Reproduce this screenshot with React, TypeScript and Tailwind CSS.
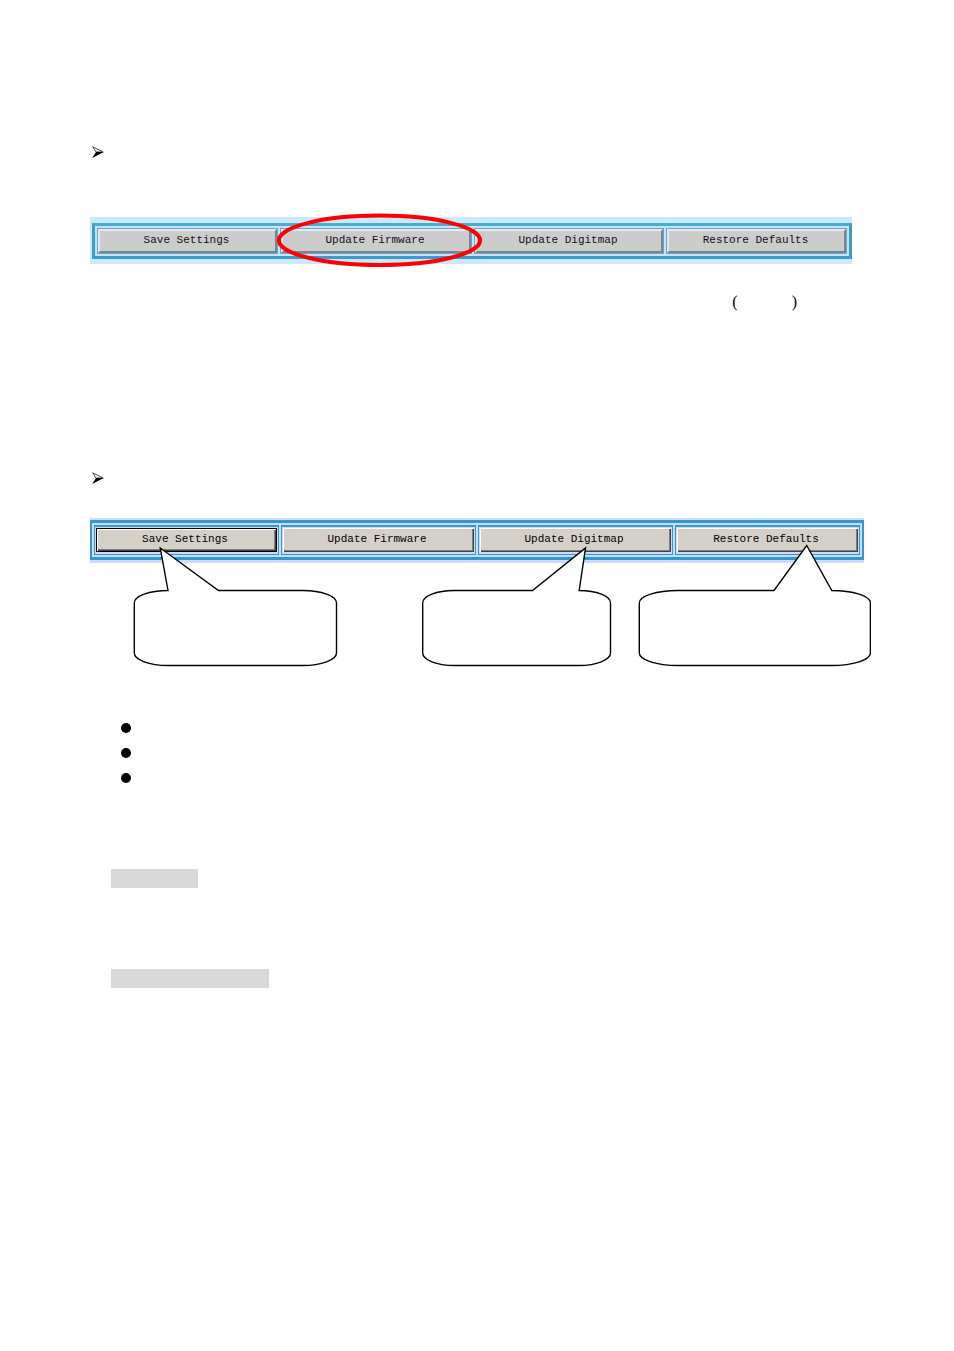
import React from "react";

const actions = ["Save Settings", "Update Firmware", "Update Digitmap", "Restore Defaults"];

function ArrowBullet() {
  return (
    <svg className="block h-3 w-3" viewBox="0 0 12 12" aria-hidden="true">
      <path d="M0.7 0.8 L11.2 6 L4 6 Z" fill="#fff" stroke="#333" strokeWidth="0.9" />
      <path d="M4 6 L11.7 6 L0.2 12 Z" fill="#000" />
    </svg>
  );
}

function SoftToolbar() {
  return (
    <div className="bg-[#cbe9fb] pt-[6px] pb-[5px] pl-[2px]">
      <div className="border-[3px] border-t-[#45b0cb] border-r-[#3a9bd0] border-b-[#3b9ad0] border-l-[#3d9fd0] bg-[#cfe0fb] p-[2px]">
        <div className="grid grid-cols-[181fr_192fr_190fr_181fr] gap-[2px]">
          {actions.map((label) => (
            <div key={label} className="flex border border-[#4fb0dc] bg-[#cfe6fa]">
              <button
                type="button"
                className="h-6 min-w-0 flex-1 border-2 border-t-[#e9eaec] border-r-[#828282] border-b-[#828282] border-l-[#e6e6e6] bg-[#cccccc] pr-[2px] pb-[2px] font-['Liberation_Mono',monospace] text-[11px] leading-4 whitespace-nowrap text-[#111]"
              >
                {label}
              </button>
            </div>
          ))}
        </div>
      </div>
    </div>
  );
}

function SharpToolbar() {
  return (
    <div className="bg-[#ccdcff] pt-[2px] pb-[3px]">
      <div className="border-x-2 border-y-[3px] border-[#3399cc] p-[2px]">
        <div className="grid grid-cols-[185fr_195fr_195fr_185fr] gap-[2px]">
          {actions.map((label, i) => (
            <div key={label} className="flex border border-t-2 border-[#3399cc] px-px pt-px pb-[2px]">
              <button
                type="button"
                className={
                  "h-6 min-w-0 flex-1 bg-[#d4d0c8] pr-[3px] pb-[2px] font-['Liberation_Mono',monospace] text-[11px] leading-4 whitespace-nowrap text-black " +
                  (i === 0
                    ? "border border-black shadow-[inset_1px_1px_0_#fff,inset_-1px_-1px_0_#404040,inset_-2px_-2px_0_#808080]"
                    : "shadow-[inset_1px_1px_0_#fff,inset_-1px_-1px_0_#404040,inset_-2px_-2px_0_#808080]")
                }
              >
                {label}
              </button>
            </div>
          ))}
        </div>
      </div>
    </div>
  );
}

function Callouts() {
  return (
    <svg
      className="pointer-events-none absolute top-0 left-0 h-auto w-full"
      viewBox="0 0 781 149"
      fill="#fff"
      stroke="#000"
      strokeWidth="1.4"
      strokeLinejoin="miter"
      aria-hidden="true"
    >
      <path d="M78 72.5 L70.3 30 L128.5 72.5 H212.8 A33.7 12.5 0 0 1 246.5 85 V135 A33.7 12.5 0 0 1 212.8 147.5 H78 A33.7 12.5 0 0 1 44.3 135 V85 A33.7 12.5 0 0 1 78 72.5 Z" />
      <path d="M364 72.5 H442.5 L495.5 30 L489.2 72.5 A31.3 12.5 0 0 1 520.5 85 V135 A31.3 12.5 0 0 1 489.2 147.5 H364 A31.3 12.5 0 0 1 332.7 135 V85 A31.3 12.5 0 0 1 364 72.5 Z" />
      <path d="M587.9 72.5 H684 L716.7 27.5 L741.8 72.5 A38.6 12.5 0 0 1 780.4 85 V135 A38.6 12.5 0 0 1 741.8 147.5 H587.9 A38.6 12.5 0 0 1 549.3 135 V85 A38.6 12.5 0 0 1 587.9 72.5 Z" />
    </svg>
  );
}

export default function App() {
  return (
    <main className="min-h-screen bg-white pt-[146px] pr-[83px] pb-16 pl-[90px] text-black">
      <section>
        <div className="pl-[2px]">
          <ArrowBullet />
        </div>
        <div className="relative mt-[59px] mr-[19px]">
          <SoftToolbar />
          <svg
            className="pointer-events-none absolute -top-1 left-0 h-auto w-full"
            viewBox="0 0 762 56"
            aria-hidden="true"
          >
            <ellipse cx="289.5" cy="27.3" rx="100.6" ry="24.7" fill="none" stroke="#f00" strokeWidth="4" />
          </svg>
        </div>
        <div className="mt-7 mr-[74px] flex h-5 justify-end gap-[54px] font-['Liberation_Serif',serif] text-base leading-5">
          <span>(</span>
          <span>)</span>
        </div>
      </section>

      <section className="mt-40">
        <div className="pl-[2px]">
          <ArrowBullet />
        </div>
        <div className="relative mt-[34px] pb-[104px]">
          <div className="mr-[7px]">
            <SharpToolbar />
          </div>
          <Callouts />
        </div>
      </section>

      <ul className="mt-14 flex flex-col gap-[15px] pl-[31px]">
        <li className="size-[10px] rounded-full bg-black" />
        <li className="size-[10px] rounded-full bg-black" />
        <li className="size-[10px] rounded-full bg-black" />
      </ul>

      <section className="mt-[86px] flex flex-col gap-[81px] pl-[21px]">
        <div className="h-[19px] w-[87px] bg-[#d9d9d9]" />
        <div className="h-[19px] w-[158px] bg-[#d9d9d9]" />
      </section>
    </main>
  );
}
